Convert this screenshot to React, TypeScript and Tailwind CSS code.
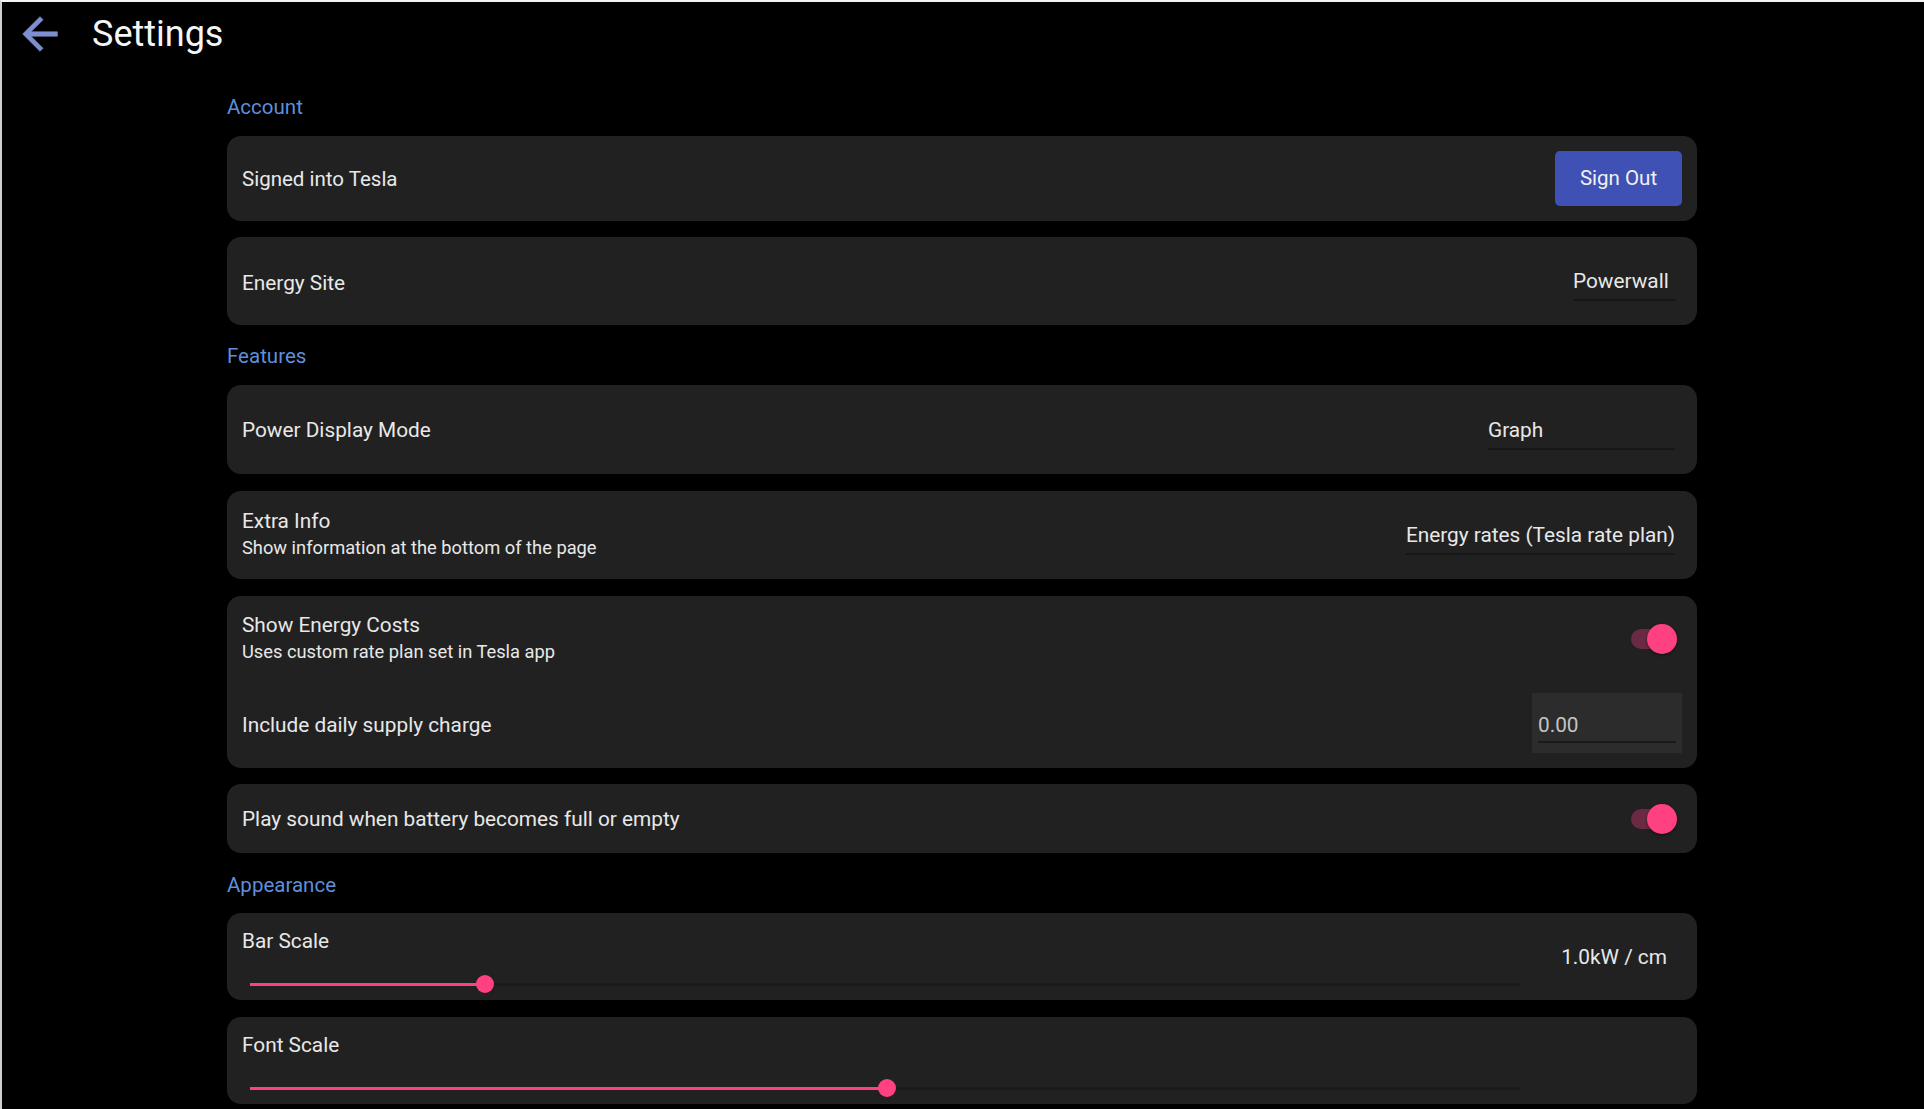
import React from "react";

const Section = ({ title }: { title: string }) => (
  <div className="text-[20.5px] leading-[24px] text-[#5f8fdc]">{title}</div>
);

const Select = ({ value, width }: { value: string; width?: string }) => (
  <div className={`border-b-2 border-[#171717] pb-[6px] text-[20.8px] leading-[24px] text-[#e8e8e8] ${width ?? ""}`}>
    {value}
  </div>
);

const Toggle = () => (
  <div className="relative h-[30px] w-[46px]">
    <div className="absolute left-0 top-[5px] h-[20px] w-[42px] rounded-full bg-[#6b2a43]" />
    <div className="absolute right-0 top-0 h-[30px] w-[30px] rounded-full bg-[#ff4081] shadow-[0_1px_3px_rgba(0,0,0,0.5)]" />
  </div>
);

const Slider = ({ value }: { value: number }) => (
  <div className="relative h-[18px] w-[1271px]">
    <div className="absolute left-0 right-0 top-[8px] h-[3px] bg-[#1b1b1b]" />
    <div className="absolute left-0 top-[8px] h-[3px] bg-[#ff4081]" style={{ width: value }} />
    <div
      className="absolute top-0 h-[18px] w-[18px] rounded-full bg-[#ff4081]"
      style={{ left: value - 9 }}
    />
  </div>
);

export default function App() {
  return (
    <div
      className="min-h-[1109px] w-full overflow-hidden border-l-2 border-t-2 border-l-[#cfcfcf] border-t-[#f4f4f4] bg-black text-[#e8e8e8]"
      style={{ fontFamily: "Roboto, 'Noto Sans', sans-serif" }}
    >
      <div className="flex h-[64px] items-center pl-[12px]">
        <svg width="52" height="52" viewBox="0 0 24 24" fill="#7e8fd0">
          <path d="M20 11H7.83l5.59-5.59L12 4l-8 8 8 8 1.41-1.41L7.83 13H20v-2z" stroke="#7e8fd0" strokeWidth="0.3" />
        </svg>
        <div className="ml-[26px] text-[36px] leading-[40px] text-[#f5f5f5]">Settings</div>
      </div>

      <div className="ml-[225px] w-[1470px] pt-[29px]">
        <Section title="Account" />
        <div className="mt-[17px] flex h-[85px] items-center justify-between rounded-[14px] bg-[#212121] pl-[15px] pr-[15px]">
          <div className="text-[20.5px] leading-[26px]">Signed into Tesla</div>
          <button className="h-[55px] w-[127px] rounded-[5px] bg-[#3f51b5] text-[20.5px] text-[#f0f0f0]">
            Sign Out
          </button>
        </div>
        <div className="mt-[16px] flex h-[88px] items-center justify-between rounded-[14px] bg-[#212121] pl-[15px] pr-[21px]">
          <div className="pt-[3px] text-[20.8px] leading-[26px]">Energy Site</div>
          <div className="pt-[8px]">
            <Select value="Powerwall" width="w-[103px]" />
          </div>
        </div>

        <div className="mt-[19px]">
          <Section title="Features" />
        </div>
        <div className="mt-[17px] flex h-[89px] items-center justify-between rounded-[14px] bg-[#212121] pl-[15px] pr-[22px]">
          <div className="text-[20.8px] leading-[26px]">Power Display Mode</div>
          <div className="pt-[8px]">
            <Select value="Graph" width="w-[187px]" />
          </div>
        </div>
        <div className="mt-[17px] flex h-[88px] items-center justify-between rounded-[14px] bg-[#212121] pl-[15px] pr-[22px]">
          <div className="flex flex-col">
            <div className="text-[20.8px] leading-[26px]">Extra Info</div>
            <div className="text-[18.3px] leading-[28px]">Show information at the bottom of the page</div>
          </div>
          <div className="pt-[8px]">
            <Select value="Energy rates (Tesla rate plan)" />
          </div>
        </div>
        <div className="mt-[17px] flex flex-col rounded-[14px] bg-[#212121] pb-[15px] pl-[15px] pr-[15px] pt-[16px]">
          <div className="flex items-center justify-between">
            <div className="flex flex-col">
              <div className="text-[20.8px] leading-[26px]">Show Energy Costs</div>
              <div className="text-[18.3px] leading-[28px]">Uses custom rate plan set in Tesla app</div>
            </div>
            <div className="mr-[5px]">
              <Toggle />
            </div>
          </div>
          <div className="mt-[27px] flex items-center justify-between">
            <div className="pt-[4px] text-[20.8px] leading-[26px]">Include daily supply charge</div>
            <div className="flex h-[60px] w-[150px] flex-col justify-end bg-[#2c2c2c] px-[6px] pb-[10px]">
              <div className="border-b-2 border-[#1a1a1a] pb-[4px] text-[20.8px] leading-[24px] text-[#c4c4c4]">0.00</div>
            </div>
          </div>
        </div>
        <div className="mt-[16px] flex h-[69px] items-center justify-between rounded-[14px] bg-[#212121] pl-[15px] pr-[20px]">
          <div className="text-[20.8px] leading-[26px]">Play sound when battery becomes full or empty</div>
          <Toggle />
        </div>

        <div className="mt-[20px]">
          <Section title="Appearance" />
        </div>
        <div className="mt-[16px] flex h-[87px] items-center justify-between rounded-[14px] bg-[#212121] pl-[15px] pr-[30px]">
          <div className="flex flex-col pt-[8px]">
            <div className="text-[20.8px] leading-[26px]">Bar Scale</div>
            <div className="ml-[8px] mt-[21px]">
              <Slider value={235} />
            </div>
          </div>
          <div className="text-[20.8px] leading-[26px]">1.0kW / cm</div>
        </div>
        <div className="mt-[17px] flex h-[87px] items-center rounded-[14px] bg-[#212121] pl-[15px] pr-[30px]">
          <div className="flex flex-col pt-[8px]">
            <div className="text-[20.8px] leading-[26px]">Font Scale</div>
            <div className="ml-[8px] mt-[21px]">
              <Slider value={637} />
            </div>
          </div>
        </div>
      </div>
    </div>
  );
}
